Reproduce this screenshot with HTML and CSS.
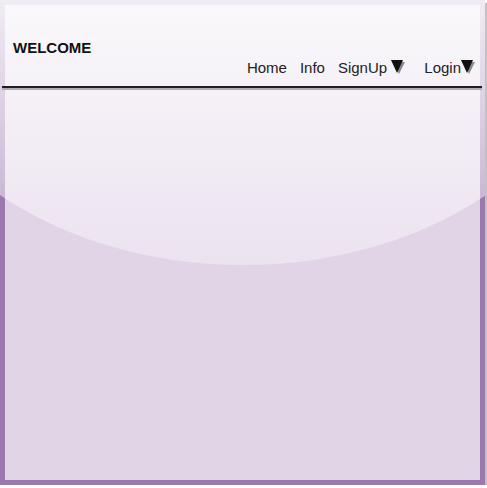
FILE: index.html
```html
<!DOCTYPE html>
<html>
<head>
<meta charset="utf-8">
<link rel="stylesheet" href="styles.css">
</head>
<body>
<div class="frame">
  <div class="panel">
    <header class="header">
      <div class="title">WELCOME</div>
      <nav class="nav">
        <span class="item">Home</span>
        <span class="item">Info</span>
        <span class="item item-signup">SignUp <svg class="arrow" width="14" height="14" viewBox="0 0 14 14"><polygon points="2,2 14,2 8,14" fill="#8a8a8a"/><polygon points="0,0 12,0 6,13" fill="#111"/></svg></span>
        <span class="item item-login">Login<svg class="arrow" width="14" height="14" viewBox="0 0 14 14"><polygon points="2,2 14,2 8,14" fill="#8a8a8a"/><polygon points="0,0 12,0 6,13" fill="#111"/></svg></span>
      </nav>
    </header>
    <div class="rule"></div>
  </div>
</div>
</body>
</html>
```
FILE: styles.css
```css
html, body {
  margin: 0;
  padding: 0;
  background: #ffffff;
}
body {
  font-family: "Liberation Sans", Arial, sans-serif;
}
.frame {
  position: relative;
  width: 485px;
  height: 485px;
  box-sizing: border-box;
  padding: 5px;
  background: #9b79ae;
  box-shadow: 2px 3px 0 #c2c2c2;
  overflow: hidden;
}
.frame::before {
  content: "";
  position: absolute;
  left: -116px;
  top: -265px;
  width: 718px;
  height: 530px;
  border-radius: 50%;
  background: linear-gradient(rgba(255,255,255,0.86) 50%, rgba(255,255,255,0.34) 100%);
  z-index: 1;
}
.panel {
  height: 100%;
  background: #e1d4e7;
}
.header {
  position: relative;
  z-index: 2;
  display: flex;
  justify-content: space-between;
  align-items: flex-start;
  height: 81px;
}
.title {
  margin-top: 34px;
  margin-left: 8px;
  font-size: 15px;
  line-height: 17px;
  font-weight: bold;
  color: #111;
}
.nav {
  display: flex;
  margin-top: 54px;
  margin-right: 5px;
  font-size: 15px;
  line-height: 17px;
  color: #222;
}
.item {
  margin-left: 13px;
  white-space: pre;
}
.item-login {
  margin-left: 19px;
}
.arrow {
  display: inline-block;
  vertical-align: -1px;
}
.rule {
  position: relative;
  z-index: 2;
  height: 2px;
  margin: 0 -2px 0 -3px;
  background: #1e1e1e;
  box-shadow: 0 2px 0 #b0aab4;
}
```
